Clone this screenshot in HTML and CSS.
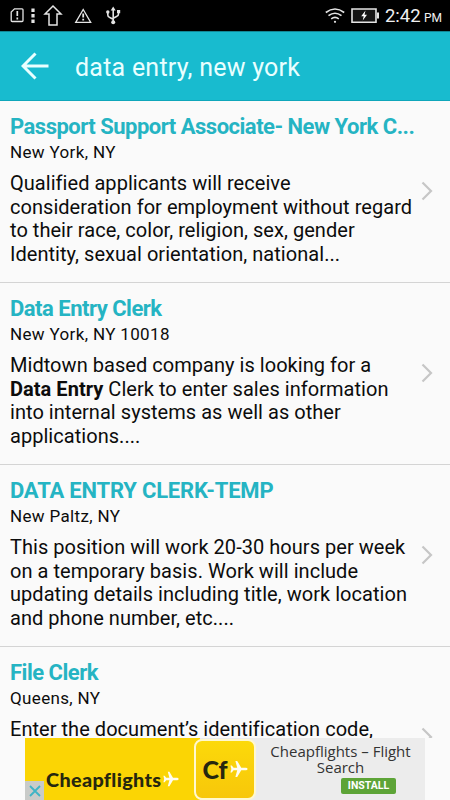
FILE: index.html
```html
<!DOCTYPE html>
<html lang="en">

<head>
    <meta charset="UTF-8">
    <meta name="viewport" content="width=device-width, initial-scale=1.0">
    <title>data entry, new york</title>
    <link rel="stylesheet" href="styles.css">
</head>

<body>
    <div class="screen">
        <!-- Status bar -->
        <div class="status-bar">
            <svg class="status-icons" width="130" height="31" viewBox="0 0 130 31" fill="none" stroke="#e4e4e4" stroke-width="1.3">
                <path d="M14.5 8.8H22q1 0 1 1V20.500q0 1-1 1H12.200q-1 0-1-1V12z" />
                <path d="M17.300 11v5M17.300 17.500v2" stroke-width="1.700" />
                <path d="M33 8.500v3.400M33 14v3.400M33 19.500v3.400" stroke-width="3.200" />
                <path d="M53 6l8 8h-4v11h-8V14h-4z" stroke-width="1.500" />
                <path d="M83.200 9.500l7.500 12.800H75.700z" />
                <path d="M83.200 13.500v4M83.200 18.700v1.700" stroke-width="1.800" />
                <path d="M113.200 8v15M107.800 12v3q0 2 2 2.500l3.400 1.800M118.500 11v3q0 2-2 2.500l-3.300 1.800" stroke-width="1.600" />
                <path d="M113.200 6.500l2.500 4h-5z" fill="#e4e4e4" stroke="none" />
                <circle cx="107.800" cy="12" r="1.700" fill="#e4e4e4" stroke="none" />
                <path d="M117 10h3.200v3.200H117z" fill="#e4e4e4" stroke="none" />
                <circle cx="113.200" cy="22.300" r="2" fill="#e4e4e4" stroke="none" />
            </svg>
            <div class="status-right">
                <svg width="54" height="31" viewBox="0 0 54 31" fill="none" stroke="#e4e4e4" stroke-width="1.600">
                    <path d="M.8 12.500Q10 5.500 19.200 12.500M3.500 15.700Q10 10.700 16.500 15.700M6.200 18.800Q10 16 13.800 18.800" />
                    <circle cx="10" cy="21.800" r="1.100" fill="#e4e4e4" stroke="none" />
                    <path d="M27 9h24v13.200H27z" fill="#151515" />
                    <path d="M53 12.500v6" stroke-width="2" />
                    <path d="M40.500 10.500l-4.300 5.800h2.500l-1 4.200 4.300-5.700h-2.500z" fill="#fff" stroke="none" />
                </svg>
                <span class="clock">2:42</span>
                <span class="meridiem">PM</span>
            </div>
        </div>

        <!-- Toolbar -->
        <header class="toolbar">
            <svg class="back" width="28" height="28" viewBox="0 0 28 28" fill="none" stroke="#e9ffff" stroke-width="3">
                <path d="M27.500 14H3M14.500 1.500L2 14l12.500 12.500" />
            </svg>
            <h1>data entry, new york</h1>
        </header>

        <!-- Results -->
        <main class="jobs">
            <article class="job">
                <div class="job-text">
                    <h2>Passport Support Associate- New York C...</h2>
                    <p class="location">New York, NY</p>
                    <p class="description">Qualified applicants will receive<br>consideration for employment without regard<br>to their race, color, religion, sex, gender<br>Identity, sexual orientation, national...</p>
                </div>
                <svg class="chevron" width="12" height="20" viewBox="0 0 12 20"><path d="M1.500 1.500L10 10l-8.500 8.500" /></svg>
            </article>
            <article class="job">
                <div class="job-text">
                    <h2>Data Entry Clerk</h2>
                    <p class="location">New York, NY 10018</p>
                    <p class="description">Midtown based company is looking for a<br><b>Data Entry</b> Clerk to enter sales information<br>into internal systems as well as other<br>applications....</p>
                </div>
                <svg class="chevron" width="12" height="20" viewBox="0 0 12 20"><path d="M1.500 1.500L10 10l-8.500 8.500" /></svg>
            </article>
            <article class="job">
                <div class="job-text">
                    <h2 class="caps">DATA ENTRY CLERK-TEMP</h2>
                    <p class="location">New Paltz, NY</p>
                    <p class="description">This position will work 20-30 hours per week<br>on a temporary basis. Work will include<br>updating details including title, work location<br>and phone number, etc....</p>
                </div>
                <svg class="chevron" width="12" height="20" viewBox="0 0 12 20"><path d="M1.500 1.500L10 10l-8.500 8.500" /></svg>
            </article>
            <article class="job">
                <div class="job-text">
                    <h2>File Clerk</h2>
                    <p class="location">Queens, NY</p>
                    <p class="description">Enter the document’s identification code,</p>
                </div>
                <svg class="chevron" width="12" height="20" viewBox="0 0 12 20"><path d="M1.500 1.500L10 10l-8.500 8.500" /></svg>
            </article>
        </main>

        <!-- Ad banner pinned over the list -->
        <aside class="ad">
            <div class="ad-brand">
                <span class="ad-name">Cheapflights</span>
                <svg width="16" height="16" viewBox="0 0 20 20"><path class="plane" d="M19.500 10q0 1.500-2 1.500h-5L8 19H6l2-7.500H4L2 14H.5l1-4-1-4H2l2 2.500h4L6 1h2l4.500 7.500h5q2 0 2 1.500z" /></svg>
                <div class="ad-close">
                    <svg width="12" height="12" viewBox="0 0 12 12"><path d="M1 1l10 10M11 1L1 11" stroke="#3db4c6" stroke-width="1.800" /></svg>
                </div>
            </div>
            <div class="ad-icon">
                <span>Cf</span>
                <svg width="18" height="18" viewBox="0 0 20 20"><path class="plane" d="M19.500 10q0 1.500-2 1.500h-5L8 19H6l2-7.500H4L2 14H.5l1-4-1-4H2l2 2.500h4L6 1h2l4.500 7.500h5q2 0 2 1.500z" /></svg>
            </div>
            <div class="ad-info">
                <p>Cheapflights – Flight</p>
                <p>Search</p>
                <span class="install">INSTALL</span>
            </div>
        </aside>
    </div>
</body>

</html>
```

FILE: styles.css
```css
* {
    box-sizing: border-box;
}

body {
    margin: 0;
    font-family: Roboto, sans-serif;
    background-color: #fafafa;
    color: #0c0c0c;
}

h1,
h2,
p {
    margin: 0;
}

svg {
    display: block;
    flex: none;
}

.screen {
    position: relative;
    width: 450px;
    height: 800px;
    overflow: hidden;
}

/* Status bar */
.status-bar {
    display: flex;
    justify-content: space-between;
    height: 31px;
    padding-right: 8px;
    background-color: #000;
    color: #f0f0f0;
}

.status-right {
    display: flex;
    align-items: baseline;
}

.status-right svg {
    align-self: center;
    margin-right: 6px;
}

.clock {
    font-size: 18.5px;
    line-height: 33px;
    width: 39px;
    white-space: nowrap;
}

.meridiem {
    font-size: 12px;
}

/* Toolbar */
.toolbar {
    display: flex;
    align-items: center;
    height: 70px;
    padding-left: 21px;
    background-color: #18bbcf;
    border-top: 1px solid #128796;
    border-bottom: 1px solid #0fa6ba;
    color: #e9ffff;
}

.toolbar h1 {
    margin-left: 26px;
    padding-top: 3px;
    font-size: 25px;
    font-weight: 400;
    letter-spacing: 0.24px;
    white-space: nowrap;
}

/* Results */
.job {
    display: flex;
    align-items: center;
    justify-content: space-between;
    height: 182px;
    padding: 0 17px 2px 10px;
    border-bottom: 1px solid #d4d4d4;
}

.job-text {
    align-self: flex-start;
    width: 406px;
    padding-top: 13px;
    white-space: nowrap;
}

.job h2 {
    font-size: 22px;
    line-height: 26px;
    font-weight: 700;
    letter-spacing: -0.5px;
    color: #25b4c3;
}

.job h2.caps {
    letter-spacing: -0.2px;
}

.location {
    font-size: 17px;
    line-height: 25px;
    letter-spacing: 0.35px;
}

.description {
    margin-top: 7px;
    font-size: 20px;
    line-height: 23.7px;
    letter-spacing: 0.04px;
}

.chevron path {
    fill: none;
    stroke: #c6c6c6;
    stroke-width: 2.2;
}

/* Ad banner */
.ad {
    position: absolute;
    left: 0;
    bottom: 0;
    display: flex;
    width: 450px;
    height: 62px;
    padding: 0 25px;
    background-color: #fafafa;
}

.ad-brand {
    position: relative;
    display: flex;
    align-items: center;
    width: 175px;
    padding: 20px 0 0 21px;
    background-color: #fbd504;
}

.ad-name {
    width: 117px;
    font: 900 19.8px Lato, sans-serif;
    letter-spacing: 0.35px;
    color: #26270f;
}

.plane {
    fill: #fffdf0;
}

.ad-icon {
    position: relative;
    display: flex;
    align-items: center;
    justify-content: center;
    gap: 2px;
    width: 62px;
    height: 61px;
    margin: 1px 0 0 -6px;
    padding-bottom: 2px;
    border: 2px solid #fff8cf;
    border-radius: 8px;
    background: linear-gradient(#fcd90a, #f7c70a);
    font: 900 25px Lato, sans-serif;
    color: #26270f;
}

.ad-info {
    flex: 1;
    margin-left: -56px;
    padding: 5px 0 0 56px;
    text-align: center;
    font: 15px/16px "Open Sans", sans-serif;
    color: #333;
    background-color: #ececec;
}

.install {
    display: block;
    width: 55px;
    height: 16px;
    margin: 3px 0 0 85px;
    border-radius: 2px;
    background-color: #5da437;
    color: #fff;
    font: 700 10.5px/16px Roboto, sans-serif;
}

.ad-close {
    position: absolute;
    left: 0;
    bottom: 0;
    display: flex;
    align-items: center;
    justify-content: center;
    width: 19px;
    height: 19px;
    background-color: #c9cbc9;
}
```
